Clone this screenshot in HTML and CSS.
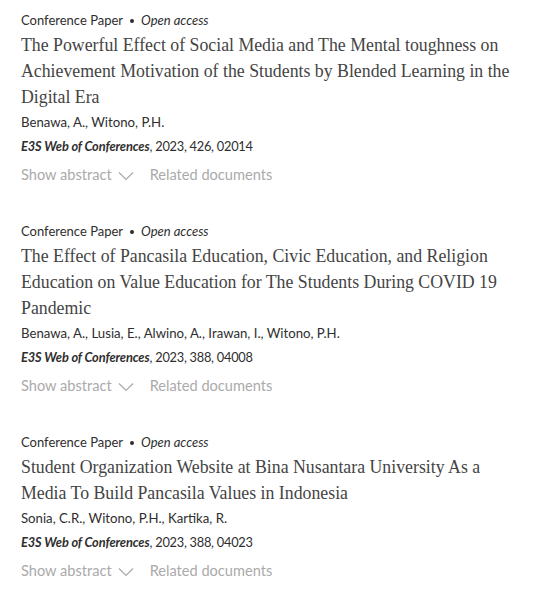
FILE: index.html
```html
<!DOCTYPE html>
<html lang="en">
<head>
<meta charset="utf-8">
<title>Documents</title>
<link rel="stylesheet" href="styles.css">
</head>
<body>
<ul class="results">
  <li class="doc">
    <div class="doc-type">Conference Paper<span class="dot"></span><em>Open access</em></div>
    <h3 class="doc-title">The Powerful Effect of Social Media and The Mental toughness on Achievement Motivation of the Students by Blended Learning in the Digital Era</h3>
    <div class="doc-authors">Benawa, A., Witono, P.H.</div>
    <div class="doc-source"><b><i>E3S Web of Conferences</i></b>, 2023, 426, 02014</div>
    <div class="doc-actions">
      <span class="action">Show abstract <svg class="chev" width="16" height="10" viewBox="0 0 16 10"><path d="M1 1.5 L8 8.5 L15 1.5" fill="none" stroke="currentColor" stroke-width="1.2"/></svg></span>
      <span class="action">Related documents</span>
    </div>
  </li>
  <li class="doc">
    <div class="doc-type">Conference Paper<span class="dot"></span><em>Open access</em></div>
    <h3 class="doc-title">The Effect of Pancasila Education, Civic Education, and Religion Education on Value Education for The Students During COVID 19 Pandemic</h3>
    <div class="doc-authors">Benawa, A., Lusia, E., Alwino, A., Irawan, I., Witono, P.H.</div>
    <div class="doc-source"><b><i>E3S Web of Conferences</i></b>, 2023, 388, 04008</div>
    <div class="doc-actions">
      <span class="action">Show abstract <svg class="chev" width="16" height="10" viewBox="0 0 16 10"><path d="M1 1.5 L8 8.5 L15 1.5" fill="none" stroke="currentColor" stroke-width="1.2"/></svg></span>
      <span class="action">Related documents</span>
    </div>
  </li>
  <li class="doc">
    <div class="doc-type">Conference Paper<span class="dot"></span><em>Open access</em></div>
    <h3 class="doc-title">Student Organization Website at Bina Nusantara University As a Media To Build Pancasila Values in Indonesia</h3>
    <div class="doc-authors">Sonia, C.R., Witono, P.H., Kartika, R.</div>
    <div class="doc-source"><b><i>E3S Web of Conferences</i></b>, 2023, 388, 04023</div>
    <div class="doc-actions">
      <span class="action">Show abstract <svg class="chev" width="16" height="10" viewBox="0 0 16 10"><path d="M1 1.5 L8 8.5 L15 1.5" fill="none" stroke="currentColor" stroke-width="1.2"/></svg></span>
      <span class="action">Related documents</span>
    </div>
  </li>
</ul>
</body>
</html>
```
FILE: styles.css
```css
body {
  margin: 0;
  background: #fff;
  font-family: Lato, "Noto Sans", sans-serif;
  color: #2e2e2e;
}
.results {
  list-style: none;
  margin: 0;
  padding: 8px 22px 0 21px;
}
.doc {
  margin-bottom: 32px;
}
.doc-type {
  display: flex;
  align-items: center;
  height: 24px;
  font-size: 13px;
  line-height: 24px;
}
.doc-type em {
  font-style: italic;
}
.dot {
  width: 4px;
  height: 4px;
  margin: 1px 7px 0 7px;
  border-radius: 50%;
  background: #2e2e2e;
}
.doc-authors,
.doc-source {
  font-size: 13.2px;
  line-height: 24px;
}
.doc-title {
  margin: 0;
  font-family: "Liberation Serif", serif;
  font-weight: normal;
  font-size: 17.8px;
  line-height: 26px;
  color: #444;
}
.doc-source {
  font-size: 12.8px;
  letter-spacing: -0.25px;
}
.doc-source b {
  font-weight: 700;
  letter-spacing: -0.1px;
}
.doc-actions {
  display: flex;
  align-items: center;
  gap: 16px;
  margin-top: 5px;
  font-size: 14.6px;
  line-height: 24px;
  color: #aaa;
}
.action {
  display: inline-flex;
  align-items: center;
  gap: 6px;
}
.chev {
  margin-top: 2px;
}
```
